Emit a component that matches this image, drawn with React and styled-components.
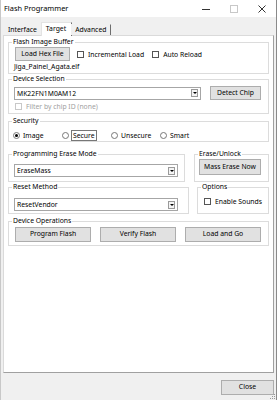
import React from "react";
import styled, { createGlobalStyle } from "styled-components";

const GlobalStyle = createGlobalStyle`
  html, body {
    margin: 0;
    padding: 0;
    background: #ffffff;
  }
  body {
    font-family: "Noto Sans", "Open Sans", "Liberation Sans", sans-serif;
    font-size: 6.8px;
    color: #000;
    white-space: nowrap;
  }
`;

const Window = styled.div`
  position: relative;
  width: 277px;
  height: 400px;
  box-sizing: border-box;
  background: #f0f0f0;
  border-left: 1px solid #c8c8c8;
  border-right: 1px solid #8a8a8a;
  display: flex;
  flex-direction: column;
`;

const TitleBar = styled.div`
  height: 17px;
  background: #fff;
  display: flex;
  align-items: center;
  padding-left: 3px;
`;

const Title = styled.div`
  flex: 1;
  font-size: 7.4px;
  line-height: 17px;
`;

const Control = styled.div`
  width: 28px;
  height: 17px;
  display: flex;
  align-items: center;
  justify-content: center;
`;

const Body = styled.div`
  flex: 1;
  display: flex;
  flex-direction: column;
  padding: 4px 2px 0 2px;
`;

const TabStrip = styled.div`
  display: flex;
  align-items: flex-end;
  height: 14px;
  padding-left: 1px;
  position: relative;
  z-index: 1;
`;

const Tab = styled.div`
  height: ${(p) => (p.active ? "14px" : "11px")};
  line-height: ${(p) => (p.active ? "11px" : "10px")};
  padding: 0 ${(p) => (p.active ? "5px" : "4px")} 0 ${(p) => (p.active ? "4px" : "3px")};
  margin: 0 ${(p) => (p.active ? "-1px" : "0")};
  background: ${(p) => (p.active ? "#fff" : "#f0f0f0")};
  border-left: 1px solid ${(p) => (p.active ? "#e3e3e3" : "#f0f0f0")};
  border-right: 1px solid #6e6e6e;
  border-top: 1px solid ${(p) => (p.active ? "#e3e3e3" : "transparent")};
  box-sizing: border-box;
  margin-bottom: ${(p) => (p.active ? "-1px" : "0")};
`;

const Panel = styled.div`
  height: 338px;
  box-sizing: border-box;
  background: #fff;
  border: 1px solid;
  border-color: #dadada #a0a0a0 #a0a0a0 #dadada;
  padding: 6px 4px 0 4px;
  display: flex;
  flex-direction: column;
`;

const Group = styled.div`
  position: relative;
  box-sizing: border-box;
  height: ${(p) => p.h}px;
  width: ${(p) => (p.w ? `${p.w}px` : "auto")};
  margin-top: ${(p) => p.mt || 0}px;
  border: 1px solid #dcdcdc;
  padding: ${(p) => p.pad || "4px 6px 0 6px"};
  display: flex;
  flex-direction: column;
`;

const Legend = styled.span`
  position: absolute;
  top: -6px;
  left: 3px;
  padding: 0 1px;
  background: #fff;
  line-height: 10px;
`;

const Row = styled.div`
  display: flex;
  align-items: center;
  justify-content: ${(p) => p.justify || "flex-start"};
  margin-top: ${(p) => p.mt || 0}px;
`;

const GroupRow = styled.div`
  display: flex;
  justify-content: space-between;
  margin-top: ${(p) => p.mt || 0}px;
`;

const Button = styled.button`
  font: inherit;
  color: #000;
  box-sizing: border-box;
  width: ${(p) => p.w}px;
  height: ${(p) => p.h || 15}px;
  background: #e1e1e1;
  border: 1px solid #adadad;
  padding: 0;
  line-height: 1;
  margin: 0;
`;

const Check = styled.label`
  display: flex;
  align-items: center;
  gap: 4px;
  margin-left: ${(p) => p.ml || 0}px;
  margin-top: ${(p) => p.mt || 0}px;
  color: ${(p) => (p.disabled ? "#a0a0a0" : "#000")};
`;

const Box = styled.span`
  width: 7px;
  height: 7px;
  box-sizing: border-box;
  border: 1px solid ${(p) => (p.disabled ? "#c8c8c8" : "#555")};
  background: #fff;
`;

const FileName = styled.div`
  margin-top: 1px;
  margin-left: -1px;
  line-height: 10px;
`;

const Combo = styled.div`
  box-sizing: border-box;
  width: ${(p) => p.w}px;
  height: ${(p) => p.h || 13}px;
  border: 1px solid #a6a6a6;
  background: #fff;
  display: flex;
  align-items: center;
  justify-content: space-between;
  padding-left: 2px;
  padding-right: 2px;
`;

const DropButton = styled.span`
  width: 7px;
  height: 8px;
  box-sizing: border-box;
  border: 1px solid #9a9a9a;
  background: #f4f4f4;
  display: flex;
  align-items: center;
  justify-content: center;
  &::after {
    content: "";
    border-left: 2px solid transparent;
    border-right: 2px solid transparent;
    border-top: 2px solid #000;
  }
`;

const Radio = styled.label`
  display: flex;
  align-items: center;
  gap: 3px;
  width: 49px;
`;

const Dot = styled.span`
  width: 7px;
  height: 7px;
  box-sizing: border-box;
  border-radius: 50%;
  border: 1px solid #777;
  background: #fff;
  display: flex;
  align-items: center;
  justify-content: center;
  &::after {
    content: "";
    width: 3px;
    height: 3px;
    border-radius: 50%;
    background: ${(p) => (p.checked ? "#000" : "transparent")};
  }
`;

const Focus = styled.span`
  outline: 1px solid #777;
  padding: 0 1px;
  line-height: 9px;
`;

const Footer = styled.div`
  display: flex;
  justify-content: flex-end;
  margin-top: 7px;
`;

const Grip = styled.svg`
  position: absolute;
  right: 0;
  bottom: 0;
`;

const Combobox = ({ w, value }) => (
  <Combo w={w}>
    <span>{value}</span>
    <DropButton />
  </Combo>
);

export default function App() {
  return (
    <>
      <GlobalStyle />
      <Window>
        <TitleBar>
          <Title>Flash Programmer</Title>
          <Control>
            <svg width="8" height="8">
              <line x1="0" y1="4.5" x2="8" y2="4.5" stroke="#333" />
            </svg>
          </Control>
          <Control>
            <svg width="8" height="8">
              <rect x="0.5" y="0.5" width="7" height="7" fill="none" stroke="#c8c8c8" />
            </svg>
          </Control>
          <Control>
            <svg width="8" height="8">
              <path d="M0.5 0.5 L7.5 7.5 M7.5 0.5 L0.5 7.5" stroke="#333" />
            </svg>
          </Control>
        </TitleBar>
        <Body>
          <TabStrip>
            <Tab>Interface</Tab>
            <Tab active>Target</Tab>
            <Tab>Advanced</Tab>
          </TabStrip>
          <Panel>
            <Group h={32}>
              <Legend>Flash Image Buffer</Legend>
              <Row>
                <Button w={55} h={14}>Load Hex File</Button>
                <Check ml={7}>
                  <Box />
                  Incremental Load
                </Check>
                <Check ml={8}>
                  <Box />
                  Auto Reload
                </Check>
              </Row>
              <FileName>Jiga_Painel_Agata.elf</FileName>
            </Group>

            <Group h={35} mt={5} pad="6px 7px 0 5px">
              <Legend>Device Selection</Legend>
              <Row justify="space-between">
                <Combobox w={187} value="MK22FN1M0AM12" />
                <Button w={51} h={14}>Detect Chip</Button>
              </Row>
              <Check disabled mt={2} ml={1}>
                <Box disabled />
                Filter by chip ID (none)
              </Check>
            </Group>

            <Group h={21} mt={7} pad="0 4px">
              <Legend>Security</Legend>
              <Row mt={9}>
                <Radio>
                  <Dot checked />
                  Image
                </Radio>
                <Radio>
                  <Dot />
                  <Focus>Secure</Focus>
                </Radio>
                <Radio>
                  <Dot />
                  Unsecure
                </Radio>
                <Radio>
                  <Dot />
                  Smart
                </Radio>
              </Row>
            </Group>

            <GroupRow mt={12}>
              <Group h={28} w={177} pad="9px 6px 0 5px">
                <Legend>Programming Erase Mode</Legend>
                <Combobox w={164} value="EraseMass" />
              </Group>
              <Group h={28} w={75} pad="4px 0 0 4px">
                <Legend>Erase/Unlock</Legend>
                <Button w={62} h={16}>Mass Erase Now</Button>
              </Group>
            </GroupRow>

            <GroupRow mt={5}>
              <Group h={27} w={181} pad="10px 6px 0 5px">
                <Legend>Reset Method</Legend>
                <Combobox w={164} value="ResetVendor" />
              </Group>
              <Group h={27} w={72} pad="9px 0 0 6px">
                <Legend>Options</Legend>
                <Check>
                  <Box />
                  Enable Sounds
                </Check>
              </Group>
            </GroupRow>

            <Group h={25} mt={7} pad="5px 7px 0 6px">
              <Legend>Device Operations</Legend>
              <Row justify="space-between">
                <Button w={76}>Program Flash</Button>
                <Button w={76}>Verify Flash</Button>
                <Button w={76}>Load and Go</Button>
              </Row>
            </Group>
          </Panel>
          <Footer>
            <Button w={53}>Close</Button>
          </Footer>
        </Body>
        <Grip width="6" height="6">
          <rect x="4" y="0" width="1" height="1" fill="#999" />
          <rect x="2" y="2" width="1" height="1" fill="#999" />
          <rect x="4" y="2" width="1" height="1" fill="#999" />
          <rect x="0" y="4" width="1" height="1" fill="#999" />
          <rect x="2" y="4" width="1" height="1" fill="#999" />
          <rect x="4" y="4" width="1" height="1" fill="#999" />
        </Grip>
      </Window>
    </>
  );
}
